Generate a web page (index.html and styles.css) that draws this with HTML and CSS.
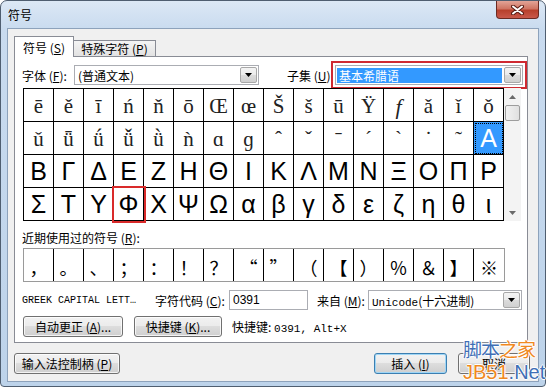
FILE: index.html
```html
<!doctype html>
<html>
<head>
<meta charset="utf-8">
<title>符号</title>
<link rel="stylesheet" href="styles.css">
</head>
<body>
<div class="window">
	<div class="titlebar">
		<span class="title">符号</span>
		<div class="close">
			<svg width="13" height="10" viewBox="0 0 13 10"><path d="M2 1.5L11 8.5M11 1.5L2 8.5" stroke="#5a1c14" stroke-width="4" stroke-linecap="round"/><path d="M2 1.5L11 8.5M11 1.5L2 8.5" stroke="#fff" stroke-width="2" stroke-linecap="round"/></svg>
		</div>
	</div>

	<div class="client">
		<div class="tabs">
			<div class="tab active">符号 (<u>S</u>)</div>
			<div class="tab">特殊字符 (<u>P</u>)</div>
		</div>

		<div class="panel">
			<div class="font-row">
				<span class="font-label">字体 (<u>F</u>):</span>
				<div class="select font-select">
					<span class="val">(普通文本)</span>
					<span class="drop"><svg width="7" height="4"><path d="M0 0h7L3.5 4z" fill="#000"/></svg></span>
				</div>
				<span class="subset-label">子集 (<u>U</u>)</span>
				<div class="select subset-select">
					<span class="val hl">基本希腊语</span>
					<span class="drop"><svg width="7" height="4"><path d="M0 0h7L3.5 4z" fill="#000"/></svg></span>
				</div>
			</div>

			<div class="grid-wrap">
				<div class="grid">
					<div class="cell s">ē</div><div class="cell s">ě</div><div class="cell s">ī</div><div class="cell s">ń</div>
					<div class="cell s">ň</div><div class="cell s">ō</div><div class="cell s">Œ</div><div class="cell s">œ</div>
					<div class="cell s">Š</div><div class="cell s">š</div><div class="cell s">ū</div><div class="cell s">Ÿ</div>
					<div class="cell s"><i>f</i></div><div class="cell s">ǎ</div><div class="cell s">ǐ</div><div class="cell s">ǒ</div>

					<div class="cell s">ǔ</div><div class="cell s">ǖ</div><div class="cell s">ǘ</div><div class="cell s">ǚ</div>
					<div class="cell s">ǜ</div><div class="cell s">ǹ</div><div class="cell s">ɑ</div><div class="cell s">ɡ</div>
					<div class="cell s">ˆ</div><div class="cell s">ˇ</div><div class="cell s">ˉ</div><div class="cell s">ˊ</div>
					<div class="cell s">ˋ</div><div class="cell s">˙</div><div class="cell s">˜</div><div class="cell g current">Α</div>

					<div class="cell g">Β</div><div class="cell g">Γ</div><div class="cell g">Δ</div><div class="cell g">Ε</div>
					<div class="cell g">Ζ</div><div class="cell g">Η</div><div class="cell g">Θ</div><div class="cell g">Ι</div>
					<div class="cell g">Κ</div><div class="cell g">Λ</div><div class="cell g">Μ</div><div class="cell g">Ν</div>
					<div class="cell g">Ξ</div><div class="cell g">Ο</div><div class="cell g">Π</div><div class="cell g">Ρ</div>

					<div class="cell g">Σ</div><div class="cell g">Τ</div><div class="cell g">Υ</div><div class="cell g marked">Φ</div>
					<div class="cell g">Χ</div><div class="cell g">Ψ</div><div class="cell g">Ω</div><div class="cell g">α</div>
					<div class="cell g">β</div><div class="cell g">γ</div><div class="cell g">δ</div><div class="cell g">ε</div>
					<div class="cell g">ζ</div><div class="cell g">η</div><div class="cell g">θ</div><div class="cell g">ι</div>
				</div>
				<div class="scrollbar">
					<div class="sb-btn"><svg width="7" height="4"><path d="M0 4h7L3.5 0z" fill="#6a6a6a"/></svg></div>
					<div class="sb-track"><div class="sb-thumb"></div></div>
					<div class="sb-btn"><svg width="7" height="4"><path d="M0 0h7L3.5 4z" fill="#6a6a6a"/></svg></div>
				</div>
			</div>

			<div class="recent-label">近期使用过的符号 (<u>R</u>):</div>
			<div class="recent">
				<div class="rc">，</div><div class="rc">。</div><div class="rc">、</div><div class="rc">；</div>
				<div class="rc">：</div><div class="rc">！</div><div class="rc">？</div><div class="rc">“</div>
				<div class="rc">”</div><div class="rc">（</div><div class="rc">【</div><div class="rc">）</div>
				<div class="rc">％</div><div class="rc">＆</div><div class="rc">】</div><div class="rc">※</div>
			</div>

			<div class="info-row">
				<span class="charname">GREEK CAPITAL LETT…</span>
				<span class="code-label">字符代码 (<u>C</u>):</span>
				<div class="input">0391</div>
				<span class="from-label">来自 (<u>M</u>):</span>
				<div class="select from-select">
					<span class="val"><span class="mono">Unicode</span>(十六进制)</span>
					<span class="drop"><svg width="7" height="4"><path d="M0 0h7L3.5 4z" fill="#000"/></svg></span>
				</div>
			</div>

			<div class="btn-row">
				<div class="btn auto-btn">自动更正 (<u>A</u>)...</div>
				<div class="btn key-btn">快捷键 (<u>K</u>)...</div>
				<span class="shortcut">快捷键: <span class="mono">0391, Alt+X</span></span>
			</div>
		</div>

		<div class="footer">
			<div class="btn ime-btn">输入法控制柄 (<u>P</u>)</div>
			<div class="btn default insert-btn">插入 (<u>I</u>)</div>
			<div class="btn cancel-btn">取消</div>
		</div>
	</div>

	<div class="watermark">
		<div class="wm-top"><span class="blue">脚本</span><span class="orange">之家</span></div>
		<div class="wm-bottom"><span class="orange">JB51</span><span class="blue">.Net</span></div>
	</div>
</div>
</body>
</html>
```

FILE: styles.css
```css
body{
	margin:0;
	width:546px;
	height:387px;
	overflow:hidden;
	background:#fff;
	font-family:"Noto Sans CJK SC", sans-serif;
	font-size:12px;
	color:#000;
	}
u{
	text-decoration:underline;
	}
.mono{
	font-family:"Liberation Mono", monospace;
	font-size:11px;
	}
.window{
	position:relative;
	width:546px;
	height:387px;
	box-sizing:border-box;
	border:1px solid #4f5e70;
	border-radius:7px 7px 4px 4px;
	background:linear-gradient(#dce8f5 0, #c9dbef 28px, #bdd3ea 100%);
	padding:0 6px 4px 6px;
	display:flex;
	flex-direction:column;
	}
.titlebar{
	height:27px;
	display:flex;
	align-items:center;
	}
.title{
	padding-left:1px;
	font-size:12px;
	}
.close{
	margin-left:auto;
	align-self:flex-start;
	width:43px;
	height:18px;
	box-sizing:border-box;
	border:1px solid #6b2a22;
	border-top:none;
	border-radius:0 0 4px 4px;
	background:linear-gradient(#e3a497 0, #cf7563 45%, #b8402c 55%, #c9584a 100%);
	display:flex;
	align-items:center;
	justify-content:center;
	}
.client{
	flex:1;
	border:1px solid #8da2bb;
	background:#f0f0f0;
	display:flex;
	flex-direction:column;
	}
.tabs{
	display:flex;
	align-items:flex-end;
	height:20px;
	margin:7px 0 0 6px;
	position:relative;
	z-index:1;
	}
.tab{
	box-sizing:border-box;
	height:16px;
	width:82px;
	border:1px solid #898c95;
	border-left:none;
	border-bottom:none;
	background:linear-gradient(#f4f4f4, #e2e2e2);
	display:flex;
	align-items:center;
	justify-content:center;
	}
.tab.active{
	width:60px;
	height:21px;
	margin-bottom:-1px;
	border-left:1px solid #898c95;
	background:#fff;
	}
.panel{
	margin-left:6px;
	width:514px;
	height:287px;
	box-sizing:border-box;
	border:1px solid #898c95;
	background:#fff;
	}
.font-row{
	display:flex;
	align-items:center;
	height:20px;
	margin-top:8px;
	}
.font-label{
	margin-left:7px;
	width:52px;
	}
.subset-label{
	margin-left:28px;
	width:48px;
	}
.select{
	box-sizing:border-box;
	height:20px;
	border:1px solid #abadb3;
	background:#fff;
	display:flex;
	align-items:center;
	}
.select .val{
	flex:1;
	padding-left:3px;
	white-space:nowrap;
	}
.drop{
	box-sizing:border-box;
	width:17px;
	height:16px;
	margin-right:1px;
	border:1px solid #a8a8a8;
	border-radius:2px;
	background:linear-gradient(#f4f4f4 0, #ebebeb 50%, #dcdcdc 50%, #d0d0d0 100%);
	display:flex;
	align-items:center;
	justify-content:center;
	}
.font-select{
	width:185px;
	}
.subset-select{
	width:188px;
	outline:2px solid #cf2a32;
	outline-offset:2px;
	}
.select .hl{
	margin:1px 2px 1px 1px;
	padding-left:2px;
	height:15px;
	line-height:15px;
	background:#3399ff;
	color:#fff;
	}
.grid-wrap{
	display:flex;
	margin:3px 0 0 8px;
	}
.grid{
	display:grid;
	grid-template-columns:repeat(16, 30px);
	grid-auto-rows:33px;
	border-top:1px solid #000;
	border-left:1px solid #000;
	}
.cell{
	box-sizing:border-box;
	border-right:1px solid #000;
	border-bottom:1px solid #000;
	display:flex;
	align-items:center;
	justify-content:center;
	color:#222;
	}
.cell.s{
	font-family:"Liberation Serif", serif;
	font-size:21px;
	padding-top:3px;
	}
.cell.s i{
	font-size:22px;
	}
.cell.g{
	font-family:"Liberation Sans", sans-serif;
	font-size:25px;
	color:#000;
	}
.cell.current{
	background:#3399ff;
	color:#fff;
	outline:1px dotted #000;
	outline-offset:-2px;
	}
.cell.marked{
	box-shadow:0 0 0 2px #d92a2a;
	position:relative;
	}
.scrollbar{
	width:17px;
	height:133px;
	display:flex;
	flex-direction:column;
	background:#f3f3f3;
	}
.sb-btn{
	height:17px;
	display:flex;
	align-items:center;
	justify-content:center;
	}
.sb-track{
	flex:1;
	}
.sb-thumb{
	height:16px;
	margin:0 1px;
	box-sizing:border-box;
	border:1px solid #9d9d9d;
	border-radius:2px;
	background:linear-gradient(90deg, #f2f2f2, #e0e0e0);
	}
.recent-label{
	margin:10px 0 0 7px;
	line-height:14px;
	}
.recent{
	display:flex;
	margin:3px 0 0 8px;
	width:482px;
	height:34px;
	box-sizing:border-box;
	border:1px solid #9a9a9a;
	}
.rc{
	width:30px;
	box-sizing:border-box;
	border-right:1px solid #000;
	display:flex;
	align-items:center;
	justify-content:center;
	font-size:18px;
	padding-top:4px;
	}
.rc:last-child{
	border-right:none;
	}
.info-row{
	display:flex;
	align-items:center;
	height:20px;
	margin-top:8px;
	}
.charname{
	margin-left:7px;
	width:133px;
	font-family:"Liberation Mono", monospace;
	font-size:10px;
	white-space:nowrap;
	}
.code-label{
	width:74px;
	white-space:nowrap;
	}
.input{
	box-sizing:border-box;
	width:79px;
	height:20px;
	border:1px solid #abadb3;
	padding-left:3px;
	line-height:18px;
	font-family:"Liberation Sans", sans-serif;
	}
.from-label{
	margin-left:9px;
	width:51px;
	white-space:nowrap;
	}
.from-select{
	width:154px;
	}
.btn-row{
	display:flex;
	align-items:center;
	height:21px;
	margin-top:6px;
	}
.btn{
	box-sizing:border-box;
	height:21px;
	border:1px solid #707070;
	border-radius:3px;
	background:linear-gradient(#f2f2f2 0, #ebebeb 50%, #dddddd 50%, #cfcfcf 100%);
	box-shadow:inset 0 0 0 1px rgba(255,255,255,.75);
	display:flex;
	align-items:center;
	justify-content:center;
	white-space:nowrap;
	}
.auto-btn{
	margin-left:8px;
	width:100px;
	}
.key-btn{
	margin-left:11px;
	width:88px;
	}
.shortcut{
	margin-left:10px;
	}
.footer{
	display:flex;
	align-items:center;
	margin-top:10px;
	}
.ime-btn{
	margin-left:6px;
	width:106px;
	}
.insert-btn{
	margin-left:auto;
	width:73px;
	}
.btn.default{
	border-color:#3c7fb1;
	box-shadow:inset 0 0 0 1px #9fd6f6;
	}
.cancel-btn{
	margin-left:11px;
	margin-right:8px;
	width:72px;
	}
.watermark{
	position:absolute;
	left:462px;
	top:336px;
	font-family:"Noto Sans CJK SC", sans-serif;
	text-shadow:1px 0 #fff, -1px 0 #fff, 0 1px #fff, 0 -1px #fff;
	}
.wm-top{
	font-size:19px;
	line-height:24px;
	letter-spacing:-1px;
	}
.wm-bottom{
	font-family:"Liberation Sans", sans-serif;
	font-size:20px;
	line-height:22px;
	}
.blue{
	color:#3f6fb6;
	}
.orange{
	color:#f0891f;
	}
```
